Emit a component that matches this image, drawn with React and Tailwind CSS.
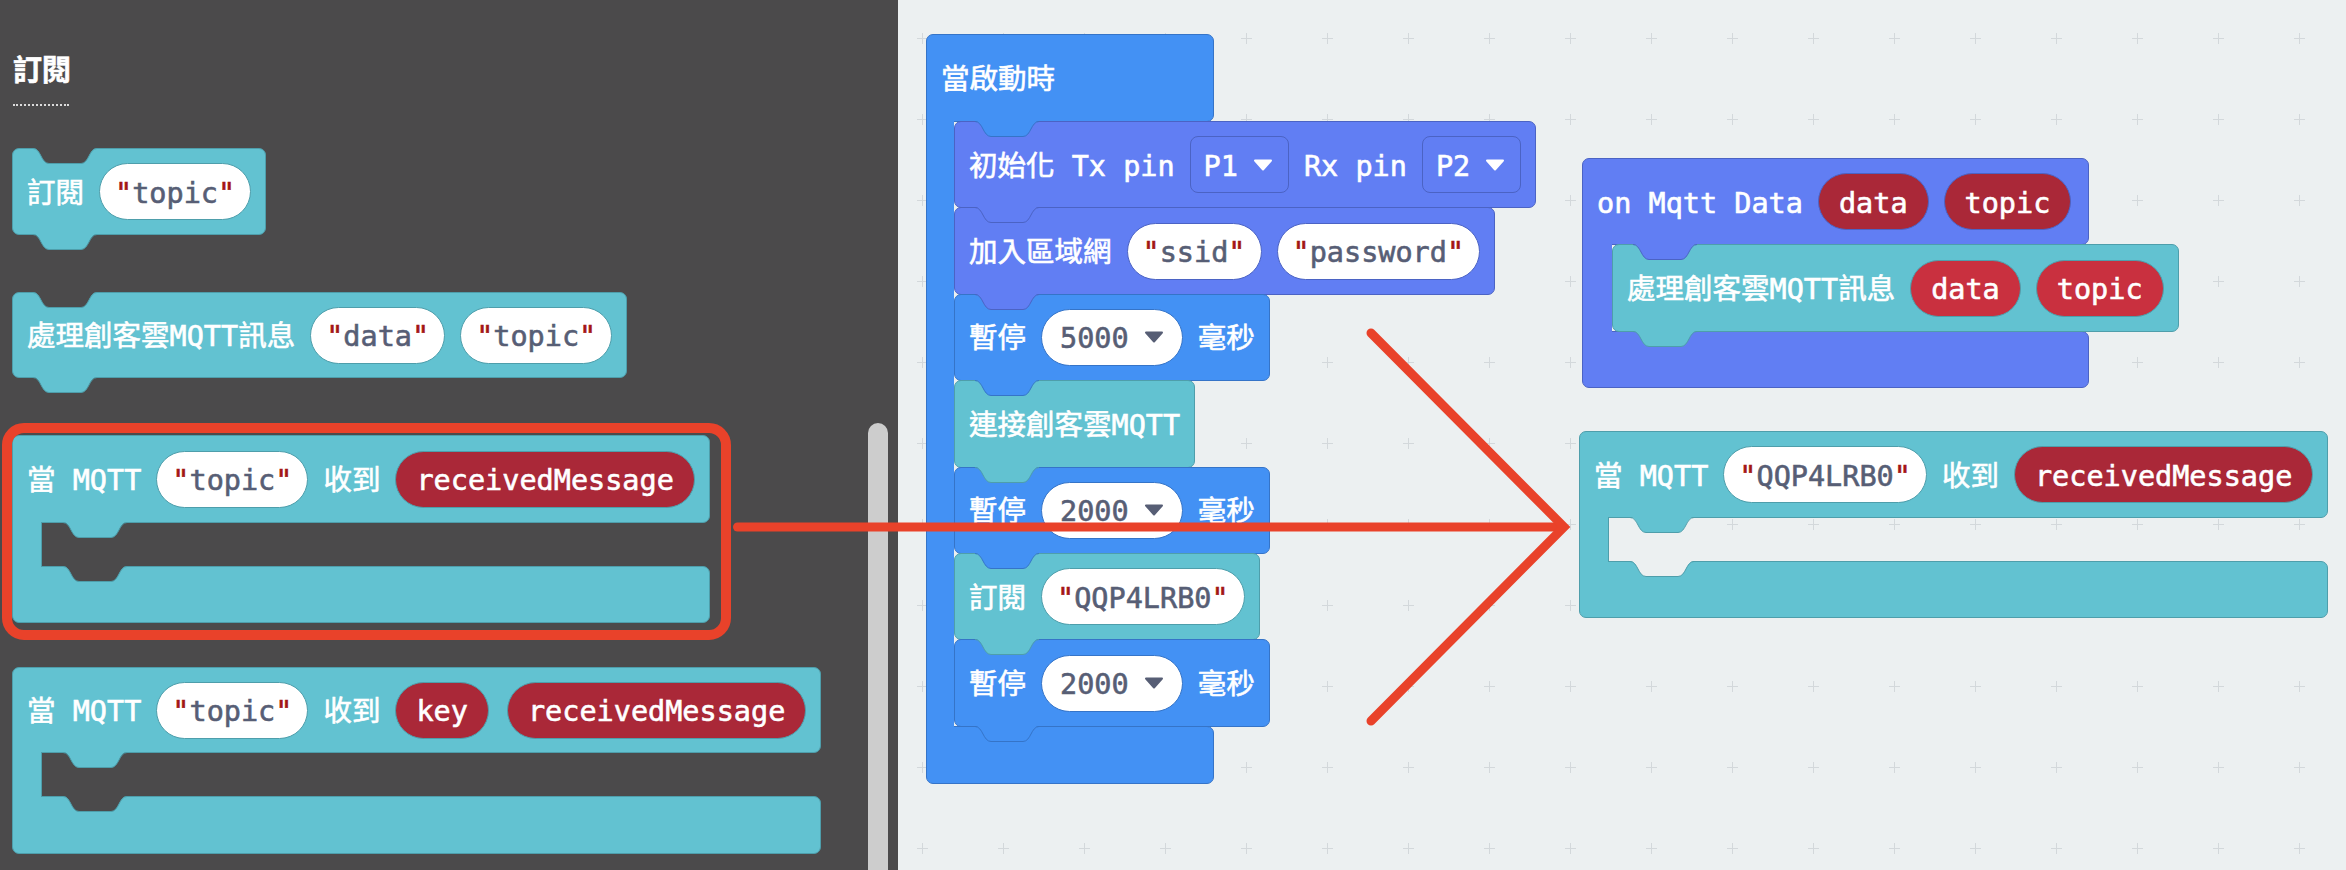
import React from 'react';

const MONO = "font-['DejaVu_Sans_Mono','Noto_Sans_CJK_TC',monospace]";

const TEAL = { bg: 'bg-[#62c2d1]', bd: 'border-[#4e9eab]', fill: '#62c2d1', stroke: '#4e9eab' };
const BLUE = { bg: 'bg-[#4391f4]', bd: 'border-[#3574c8]', fill: '#4391f4', stroke: '#3574c8' };
const INDIGO = { bg: 'bg-[#617ef3]', bd: 'border-[#4b63c4]', fill: '#617ef3', stroke: '#4b63c4' };

const DARK = '#4b4a4b';
const LIGHT = '#ecf0f1';

// same outline for the cut on top of a block and the tab hanging below it
const Notch = ({ fill, stroke, pos }) => (
  <svg width="66" height="17" viewBox="0 0 66 17" className={`absolute z-10 ${pos}`}>
    <path d="M0 0H64C56 0 56 15.5 48 15.5H16C8 15.5 8 0 0 0Z" fill={fill} />
    <path d="M0 0.5C8 0.5 8 15.5 16 15.5H48C56 15.5 56 0.5 64 0.5" fill="none" stroke={stroke} />
  </svg>
);

const Label = ({ children }) => (
  <span className="whitespace-pre pt-[4px] leading-[34px] text-white">{children}</span>
);

const Tri = ({ color }) => (
  <svg width="20" height="12" viewBox="0 0 20 12">
    <path d="M2 1.5H18L10 10.5Z" fill={color} stroke={color} strokeWidth="2" strokeLinejoin="round" />
  </svg>
);

const Str = ({ t, children }) => (
  <span className={`flex items-center h-[57px] px-[15px] pt-[4px] rounded-full bg-white border ${t.bd} text-[#575e75] leading-[34px]`}>
    <span className="text-[#a31515]">{'"'}</span>
    {children}
    <span className="text-[#a31515]">{'"'}</span>
  </span>
);

const Var = ({ t, light, children }) => (
  <span className={`flex items-center h-[57px] px-[20px] pt-[4px] rounded-full border ${t.bd} ${light ? 'bg-[#c9303f]' : 'bg-[#aa2838]'} text-white leading-[34px]`}>
    {children}
  </span>
);

const Num = ({ t, children }) => (
  <span className={`flex items-center gap-[15px] h-[57px] pl-[18px] pr-[18px] rounded-full bg-white border ${t.bd} text-[#575e75] leading-[34px]`}>
    <span className="pt-[4px]">{children}</span>
    <Tri color="#575e75" />
  </span>
);

const Pin = ({ t, children }) => (
  <span className={`flex items-center gap-[15px] h-[57px] pl-[13px] pr-[15px] rounded-[8px] border ${t.bd} text-white leading-[34px]`}>
    <span className="pt-[4px]">{children}</span>
    <Tri color="#ffffff" />
  </span>
);

function Stmt({ t, h = 'h-[87px]', top, tab = true, className = '', children }) {
  return (
    <div className={`relative flex items-center gap-[15px] px-[14px] border rounded-[7px] ${t.bg} ${t.bd} ${h} ${className}`}>
      {top && <Notch fill={top} stroke={t.stroke} pos="left-[20px] -top-px" />}
      {children}
      {tab && <Notch fill={t.fill} stroke={t.stroke} pos="left-[20px] top-full" />}
    </div>
  );
}

// block with an empty statement slot
function CBlock({ t, bg, h1, h3, className = '', children }) {
  return (
    <div className={`flex flex-col w-fit ${className}`}>
      <div className={`relative flex items-center gap-[15px] px-[14px] border rounded-t-[7px] rounded-br-[7px] ${t.bg} ${t.bd} ${h1}`}>
        {children}
        <Notch fill={t.fill} stroke={t.stroke} pos="left-[50px] top-full" />
      </div>
      <div className="relative z-[1] flex h-[45px] -my-px">
        <div className={`w-[30px] border-x ${t.bg} ${t.bd}`} />
      </div>
      <div className={`relative border rounded-b-[7px] rounded-tr-[7px] ${t.bg} ${t.bd} ${h3}`}>
        <Notch fill={bg} stroke={t.stroke} pos="left-[50px] -top-px" />
      </div>
    </div>
  );
}

// event block holding a stack of statements
function EBlock({ t, w, h1, h3, spine, tabPos, label, className = '', children }) {
  return (
    <div className={`flex flex-col items-start ${className}`}>
      <div className={`relative flex items-center gap-[15px] px-[14px] border rounded-t-[7px] rounded-br-[7px] ${t.bg} ${t.bd} ${w} ${h1}`}>
        {label}
        <Notch fill={t.fill} stroke={t.stroke} pos={`${tabPos} top-full`} />
      </div>
      <div className="flex -mt-px">
        <div className={`relative z-[1] -mb-px border-l ${t.bg} ${t.bd} ${spine}`} />
        <div className="flex flex-col items-start [&>*+*]:-mt-px">{children}</div>
      </div>
      <div className={`-mt-px border rounded-b-[7px] rounded-tr-[7px] ${t.bg} ${t.bd} ${w} ${h3}`} />
    </div>
  );
}

function Flyout() {
  return (
    <div className="relative w-[898px] h-full shrink-0 overflow-hidden bg-[#4b4a4b] pl-[12px] flex flex-col items-start">
      <div className="mt-[54px] ml-[1px] text-[29px] leading-[29px] font-bold text-white font-['Noto_Sans_CJK_TC',sans-serif]">
        訂閱
      </div>
      <div className="mt-[21px] ml-[1px] w-[56px] border-b-2 border-dotted border-white/80" />

      <Stmt t={TEAL} top={DARK} className="mt-[42px]">
        <Label>訂閱</Label>
        <Str t={TEAL}>topic</Str>
      </Stmt>

      <Stmt t={TEAL} top={DARK} h="h-[86px]" className="mt-[57px]">
        <Label>處理創客雲MQTT訊息</Label>
        <Str t={TEAL}>data</Str>
        <Str t={TEAL}>topic</Str>
      </Stmt>

      <CBlock t={TEAL} bg={DARK} h1="h-[88px]" h3="h-[57px]" className="mt-[57px]">
        <Label>當 MQTT</Label>
        <Str t={TEAL}>topic</Str>
        <Label>收到</Label>
        <Var t={TEAL}>receivedMessage</Var>
      </CBlock>

      <CBlock t={TEAL} bg={DARK} h1="h-[86px]" h3="h-[58px]" className="mt-[44px]">
        <Label>當 MQTT</Label>
        <Str t={TEAL}>topic</Str>
        <Label>收到</Label>
        <Var t={TEAL}>key</Var>
        <div className="ml-[3px]">
          <Var t={TEAL}>receivedMessage</Var>
        </div>
      </CBlock>

      {/* scrollbar */}
      <div className="absolute left-[868px] top-[423px] w-[20px] h-[520px] rounded-full bg-[#cdcdcd]" />
    </div>
  );
}

function Workspace() {
  const S = 'h-[87.4px]';
  return (
    <div className="relative flex-1 h-full overflow-hidden bg-[#ecf0f1]">
      <svg className="absolute inset-0" width="100%" height="100%">
        <defs>
          <pattern id="grid" width="81" height="81" patternUnits="userSpaceOnUse">
            <path d="M19 38.5H30M24.5 33V44" stroke="#d3d8db" strokeWidth="1" />
          </pattern>
        </defs>
        <rect width="100%" height="100%" fill="url(#grid)" />
      </svg>

      <EBlock
        t={BLUE}
        w="w-[288px]"
        h1="h-[88px]"
        h3="h-[58px]"
        spine="w-[28px]"
        tabPos="left-[48px]"
        label={<Label>當啟動時</Label>}
        className="absolute left-[28px] top-[34px]"
      >
        <Stmt t={INDIGO} h={S}>
          <Label>初始化 Tx pin</Label>
          <Pin t={INDIGO}>P1</Pin>
          <Label>Rx pin</Label>
          <Pin t={INDIGO}>P2</Pin>
        </Stmt>
        <Stmt t={INDIGO} h={S}>
          <Label>加入區域網</Label>
          <Str t={INDIGO}>ssid</Str>
          <Str t={INDIGO}>password</Str>
        </Stmt>
        <Stmt t={BLUE} h={S}>
          <Label>暫停</Label>
          <Num t={BLUE}>5000</Num>
          <Label>毫秒</Label>
        </Stmt>
        <Stmt t={TEAL} h={S}>
          <Label>連接創客雲MQTT</Label>
        </Stmt>
        <Stmt t={BLUE} h={S}>
          <Label>暫停</Label>
          <Num t={BLUE}>2000</Num>
          <Label>毫秒</Label>
        </Stmt>
        <Stmt t={TEAL} h={S}>
          <Label>訂閱</Label>
          <Str t={TEAL}>QQP4LRB0</Str>
        </Stmt>
        <Stmt t={BLUE} h={S}>
          <Label>暫停</Label>
          <Num t={BLUE}>2000</Num>
          <Label>毫秒</Label>
        </Stmt>
      </EBlock>

      <EBlock
        t={INDIGO}
        w="w-[507px]"
        h1="h-[87px]"
        h3="h-[57px]"
        spine="w-[30px]"
        tabPos="left-[50px]"
        label={
          <>
            <Label>on Mqtt Data</Label>
            <Var t={INDIGO}>data</Var>
            <Var t={INDIGO}>topic</Var>
          </>
        }
        className="absolute left-[684px] top-[158px]"
      >
        <Stmt t={TEAL} h="h-[88px]">
          <Label>處理創客雲MQTT訊息</Label>
          <Var t={TEAL} light>data</Var>
          <Var t={TEAL} light>topic</Var>
        </Stmt>
      </EBlock>

      <CBlock t={TEAL} bg={LIGHT} h1="h-[87px]" h3="h-[57px]" className="absolute left-[681px] top-[431px]">
        <Label>當 MQTT</Label>
        <Str t={TEAL}>QQP4LRB0</Str>
        <Label>收到</Label>
        <Var t={TEAL}>receivedMessage</Var>
      </CBlock>
    </div>
  );
}

export default function App() {
  return (
    <div className={`relative flex w-[2346px] h-[870px] overflow-hidden text-[28.5px] [-webkit-text-stroke:0.6px] ${MONO}`}>
      <Flyout />
      <Workspace />

      {/* annotation: highlight box and arrow */}
      <svg className="absolute inset-0 z-20 pointer-events-none" width="2346" height="870">
        <rect x="7" y="428" width="719" height="207" rx="17" fill="none" stroke="#e9422a" strokeWidth="10" />
        <path d="M737.5 527H1562" fill="none" stroke="#e9422a" strokeWidth="9" strokeLinecap="round" />
        <path d="M1371 333L1564 527L1371 721" fill="none" stroke="#e9422a" strokeWidth="9" strokeLinecap="round" strokeLinejoin="miter" />
      </svg>
    </div>
  );
}
